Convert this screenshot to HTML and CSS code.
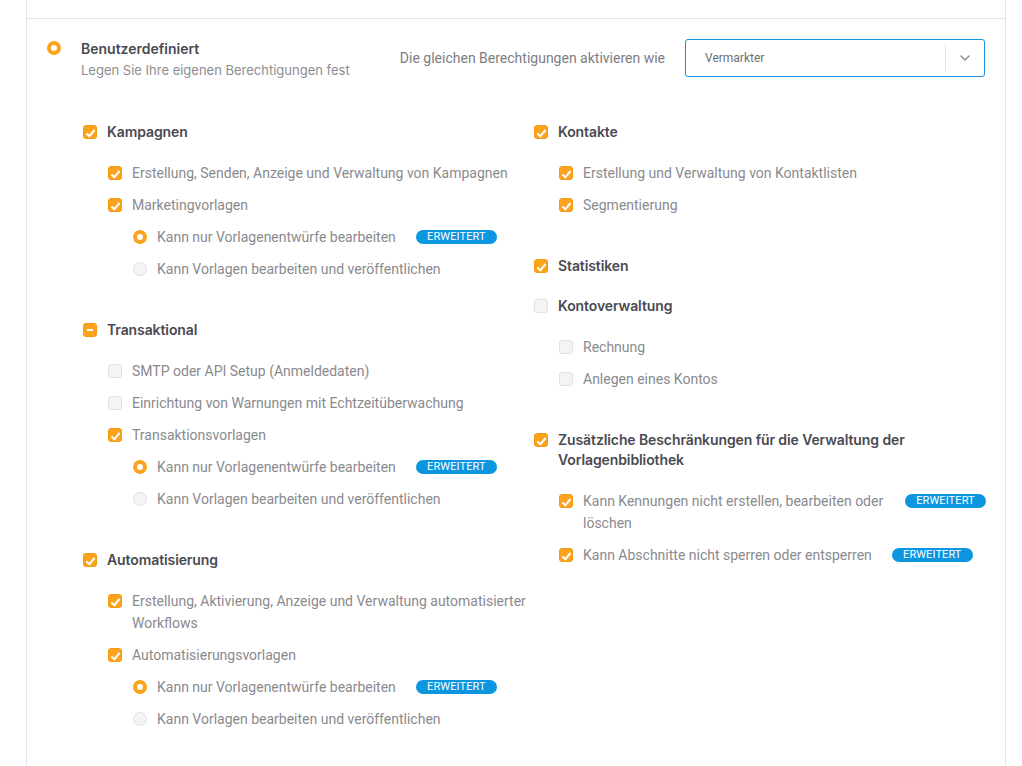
FILE: index.html
```html
<!DOCTYPE html>
<html lang="de">
<head>
<meta charset="utf-8">
<title>Berechtigungen</title>
<link rel="stylesheet" href="styles.css">
</head>
<body>
<div class="card">
  <div class="top-spacer"></div>
  <section class="option">
    <div class="option-head">
      <span class="radio on big"></span>
      <div class="option-text">
        <div class="option-title">Benutzerdefiniert</div>
        <div class="option-sub">Legen Sie Ihre eigenen Berechtigungen fest</div>
      </div>
      <div class="same-as">
        <span class="same-label">Die gleichen Berechtigungen aktivieren wie</span>
        <div class="select">
          <span class="select-value">Vermarkter</span>
          <span class="select-arrow"><svg width="10" height="6" viewBox="0 0 10 6"><path d="M1 1l4 4 4-4" fill="none" stroke="#8a8a8a" stroke-width="1.4" stroke-linecap="round" stroke-linejoin="round"/></svg></span>
        </div>
      </div>
    </div>

    <div class="columns">
      <div class="col">
        <div class="group">
          <div class="row head"><span class="cb on"></span><span class="label">Kampagnen</span></div>
          <div class="children">
            <div class="row"><span class="cb on"></span><span class="label">Erstellung, Senden, Anzeige und Verwaltung von Kampagnen</span></div>
            <div class="row"><span class="cb on"></span><span class="label">Marketingvorlagen</span></div>
            <div class="row sub2"><span class="radio on"></span><span class="label">Kann nur Vorlagenentwürfe bearbeiten</span><span class="badge">ERWEITERT</span></div>
            <div class="row sub2"><span class="radio"></span><span class="label">Kann Vorlagen bearbeiten und veröffentlichen</span></div>
          </div>
        </div>
        <div class="group">
          <div class="row head"><span class="cb mixed"></span><span class="label">Transaktional</span></div>
          <div class="children">
            <div class="row"><span class="cb"></span><span class="label">SMTP oder API Setup (Anmeldedaten)</span></div>
            <div class="row"><span class="cb"></span><span class="label">Einrichtung von Warnungen mit Echtzeitüberwachung</span></div>
            <div class="row"><span class="cb on"></span><span class="label">Transaktionsvorlagen</span></div>
            <div class="row sub2"><span class="radio on"></span><span class="label">Kann nur Vorlagenentwürfe bearbeiten</span><span class="badge">ERWEITERT</span></div>
            <div class="row sub2"><span class="radio"></span><span class="label">Kann Vorlagen bearbeiten und veröffentlichen</span></div>
          </div>
        </div>
        <div class="group">
          <div class="row head"><span class="cb on"></span><span class="label">Automatisierung</span></div>
          <div class="children">
            <div class="row"><span class="cb on"></span><span class="label">Erstellung, Aktivierung, Anzeige und Verwaltung automatisierter Workflows</span></div>
            <div class="row"><span class="cb on"></span><span class="label">Automatisierungsvorlagen</span></div>
            <div class="row sub2"><span class="radio on"></span><span class="label">Kann nur Vorlagenentwürfe bearbeiten</span><span class="badge">ERWEITERT</span></div>
            <div class="row sub2"><span class="radio"></span><span class="label">Kann Vorlagen bearbeiten und veröffentlichen</span></div>
          </div>
        </div>
      </div>

      <div class="col">
        <div class="group">
          <div class="row head"><span class="cb on"></span><span class="label">Kontakte</span></div>
          <div class="children">
            <div class="row"><span class="cb on"></span><span class="label">Erstellung und Verwaltung von Kontaktlisten</span></div>
            <div class="row"><span class="cb on"></span><span class="label">Segmentierung</span></div>
          </div>
        </div>
        <div class="group">
          <div class="row head"><span class="cb on"></span><span class="label">Statistiken</span></div>
        </div>
        <div class="group">
          <div class="row head"><span class="cb"></span><span class="label">Kontoverwaltung</span></div>
          <div class="children">
            <div class="row"><span class="cb"></span><span class="label">Rechnung</span></div>
            <div class="row"><span class="cb"></span><span class="label">Anlegen eines Kontos</span></div>
          </div>
        </div>
        <div class="group">
          <div class="row head"><span class="cb on"></span><span class="label">Zusätzliche Beschränkungen für die Verwaltung der Vorlagenbibliothek</span></div>
          <div class="children">
            <div class="row"><span class="cb on"></span><span class="label">Kann Kennungen nicht erstellen, bearbeiten oder löschen</span><span class="badge">ERWEITERT</span></div>
            <div class="row"><span class="cb on"></span><span class="label">Kann Abschnitte nicht sperren oder entsperren</span><span class="badge">ERWEITERT</span></div>
          </div>
        </div>
      </div>
    </div>
  </section>
</div>
</body>
</html>
```

FILE: styles.css
```css
* { box-sizing: border-box; }
html, body { margin: 0; padding: 0; background: #fff; }
body {
  font-family: Roboto, "Liberation Sans", Arial, sans-serif;
  font-size: 14px;
  color: #8a8a8e;
  height: 766px;
  overflow: hidden;
}
.card {
  margin-left: 26px;
  width: 980px;
  min-height: 766px;
  border-left: 1px solid #e3e3e6;
  border-right: 1px solid #e3e3e6;
}
.top-spacer {
  height: 19px;
  border-bottom: 1px solid #e3e3e6;
}
.option { padding: 20px 20px 40px 20px; }
.option-head {
  display: flex;
  align-items: flex-start;
}
.option-head .radio.big { margin-top: 2px; }
.option-text {
  margin-left: 20px;
  font-family: Inter, "Noto Sans", sans-serif;
}
.option-title {
  font-weight: 600;
  font-size: 14px;
  line-height: 20px;
  color: #4a4a52;
}
.option-sub {
  font-size: 13px;
  line-height: 22px;
  color: #8d8d91;
}
.same-as {
  margin-left: auto;
  display: flex;
  align-items: center;
}
.same-label {
  color: #7d7d82;
  font-size: 14px;
  margin-right: 20px;
}
.select {
  width: 300px;
  height: 38px;
  border: 1px solid #1595db;
  border-radius: 3px;
  display: flex;
  align-items: center;
}
.select-value {
  flex: 1;
  padding-left: 19px;
  font-size: 12px;
  color: #6e6e72;
}
.select-arrow {
  width: 39px;
  height: 26px;
  border-left: 1px solid #e3e3e6;
  display: flex;
  align-items: center;
  justify-content: center;
}

.columns {
  display: grid;
  grid-template-columns: 451px 452px;
  margin: 41px 0 0 36px;
}
.group + .group { margin-top: 20px; }
.children {
  display: flex;
  flex-direction: column;
  gap: 10px;
  padding: 20px 0 20px 25px;
}
.row {
  display: flex;
  align-items: flex-start;
  line-height: 22px;
}
.row .label { color: #8a8a8e; }
.row.head { line-height: 20px; }
.row.head .label {
  font-family: Inter, "Noto Sans", sans-serif;
  font-weight: 600;
  color: #4a4a52;
  letter-spacing: -0.1px;
}
.row.head .cb { margin-top: 3px; }
.row.sub2 { padding-left: 25px; }

.cb {
  flex: none;
  width: 14px;
  height: 14px;
  margin-top: 4px;
  margin-right: 10px;
  border-radius: 3px;
  background: #f4f4f5;
  border: 1px solid #e2e2e4;
  position: relative;
}
.cb.on, .cb.mixed { background: #fba31c; border-color: #f39a10; }
.cb.on::after {
  content: "";
  position: absolute;
  left: 4px;
  top: 1.5px;
  width: 3px;
  height: 7px;
  border: solid #fff;
  border-width: 0 2px 2px 0;
  transform: rotate(40deg);
}
.cb.mixed::after {
  content: "";
  position: absolute;
  left: 3px;
  top: 5px;
  width: 6px;
  height: 2px;
  background: #fff;
}

.radio {
  flex: none;
  width: 14px;
  height: 14px;
  margin-top: 4px;
  margin-right: 10px;
  border-radius: 50%;
  background: #f4f4f5;
  border: 1px solid #e2e2e4;
}
.radio.on {
  background: #fff;
  border: 4.5px solid #fba31c;
}
.option-head .radio.big { margin-right: 0; }

.badge {
  flex: none;
  margin-left: 20px;
  margin-top: 4px;
  height: 14px;
  width: 81px;
  border-radius: 7px;
  background: #0d96e0;
  color: #fff;
  font-size: 11px;
  line-height: 14px;
  text-align: center;
  letter-spacing: 0.1px;
}
```
